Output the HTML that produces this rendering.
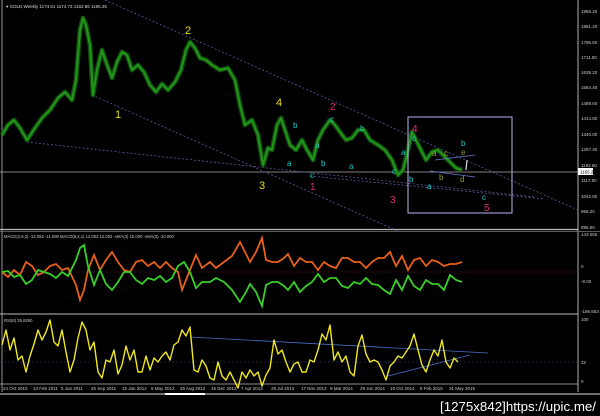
<!DOCTYPE html>
<html><head><meta charset="utf-8"><style>
html,body{margin:0;padding:0;background:#000;width:600px;height:416px;overflow:hidden}
svg{display:block}
text{font-family:"Liberation Sans",sans-serif}
.ax{fill:#ccc;font-size:4.5px;font-family:"Liberation Serif",serif}
.y{fill:#e6df1a;font-size:11px}
.c{fill:#19c9c9;font-size:8px}
.m{fill:#e0287f;font-size:10px}
.o{fill:#9a9a30;font-size:8px}
</style></head><body>
<svg width="600" height="416" viewBox="0 0 600 416">
<rect width="600" height="416" fill="#000"/>
<line x1="2" y1="0" x2="2" y2="392" stroke="#bbb" stroke-width="0.8"/>
<line x1="578" y1="0" x2="578" y2="392" stroke="#ddd" stroke-width="0.8"/>
<line x1="0" y1="229.5" x2="578" y2="229.5" stroke="#bbb" stroke-width="1.2"/>
<line x1="0" y1="231.5" x2="600" y2="231.5" stroke="#777" stroke-width="0.8"/>
<line x1="0" y1="314" x2="578" y2="314" stroke="#bbb" stroke-width="1"/>
<line x1="0" y1="384" x2="578" y2="384" stroke="#bbb" stroke-width="0.8"/>
<line x1="0" y1="394" x2="600" y2="394" stroke="#ddd" stroke-width="1"/>
<line x1="165" y1="394" x2="205" y2="394" stroke="#fff" stroke-width="2"/>
<line x1="0" y1="172" x2="578" y2="172" stroke="#aaa" stroke-width="0.8"/>
<g stroke="#5a5a9a" stroke-width="0.8" stroke-dasharray="2,2" fill="none">
<line x1="105" y1="0" x2="578" y2="210"/>
<line x1="92" y1="95" x2="400" y2="232"/>
<line x1="27" y1="142" x2="535" y2="197"/>
<line x1="310" y1="176" x2="545" y2="199"/>
</g>
<g fill="none" stroke-linejoin="round">
<polyline stroke="#145a10" stroke-width="5" opacity="0.8" points="2,135 8,125 14,120 20,128 27,140 35,128 42,118 50,110 58,98 65,92 72,100 76,80 80,30 83,18 86,25 90,45 93,95 97,70 102,50 106,62 112,78 117,62 122,52 127,55 132,70 138,65 144,72 150,85 156,92 162,84 168,90 175,82 181,70 186,50 190,42 195,48 200,58 206,60 212,65 220,70 228,68 235,80 240,105 245,125 252,120 258,135 263,165 268,148 272,150 277,125 281,118 285,130 290,145 296,150 302,140 307,150 313,160 318,140 323,130 330,120 335,125 340,132 346,140 352,138 358,130 364,130 370,140 378,145 385,150 392,160 398,175 403,170 408,150 412,132 416,140 420,148 426,160 432,152 438,150 444,156 450,162 456,168 462,170"/>
<polyline stroke="#22951a" stroke-width="2.2" points="2,135 8,125 14,120 20,128 27,140 35,128 42,118 50,110 58,98 65,92 72,100 76,80 80,30 83,18 86,25 90,45 93,95 97,70 102,50 106,62 112,78 117,62 122,52 127,55 132,70 138,65 144,72 150,85 156,92 162,84 168,90 175,82 181,70 186,50 190,42 195,48 200,58 206,60 212,65 220,70 228,68 235,80 240,105 245,125 252,120 258,135 263,165 268,148 272,150 277,125 281,118 285,130 290,145 296,150 302,140 307,150 313,160 318,140 323,130 330,120 335,125 340,132 346,140 352,138 358,130 364,130 370,140 378,145 385,150 392,160 398,175 403,170 408,150 412,132 416,140 420,148 426,160 432,152 438,150 444,156 450,162 456,168 462,170"/>
</g>
<rect x="408" y="117" width="104" height="96" fill="none" stroke="#b8b8f0" stroke-width="1"/>
<g stroke="#6a7ad0" stroke-width="0.8"><line x1="435" y1="160" x2="475" y2="155"/><line x1="430" y1="171" x2="475" y2="177"/></g>
<line x1="466" y1="170" x2="467" y2="160" stroke="#dde" stroke-width="1.2"/>
<text class="y" x="185" y="34">2</text><text class="y" x="115" y="118">1</text>
<text class="y" x="276" y="106">4</text><text class="y" x="259" y="189">3</text>
<text class="m" x="330" y="110">2</text><text class="m" x="310" y="190">1</text>
<text class="m" x="390" y="203">3</text><text class="m" x="412" y="132">4</text><text class="m" x="484" y="211">5</text>
<g class="c">
<text x="293" y="128">b</text><text x="287" y="166">a</text><text x="330" y="122">c</text>
<text x="315" y="148">a</text><text x="321" y="166">b</text><text x="310" y="178">c</text>
<text x="360" y="131">b</text><text x="349" y="169">a</text><text x="401" y="155">a</text>
<text x="392" y="174">c</text><text x="412" y="141">c</text><text x="409" y="182">b</text>
<text x="427" y="189">a</text><text x="461" y="146">b</text><text x="482" y="200">c</text>
</g>
<g class="o"><text x="432" y="156">a</text><text x="444" y="156">c</text><text x="439" y="180">b</text><text x="460" y="182">d</text><text x="461" y="155">e</text></g>
<text x="6" y="8" fill="#ddd" font-size="4.5">▾ GOLD,Weekly 1174.61 1174.73 1162.86 1165.25</text>
<g class="ax">
<text x="581" y="13">1956.20</text><text x="581" y="28">1881.40</text><text x="581" y="44">1796.60</text>
<text x="581" y="59">1711.80</text><text x="581" y="74">1639.20</text><text x="581" y="89">1564.40</text>
<text x="581" y="105">1489.60</text><text x="581" y="120">1414.80</text><text x="581" y="136">1340.00</text>
<text x="581" y="151">1267.40</text><text x="581" y="167">1192.60</text><text x="581" y="182">1117.80</text>
<text x="581" y="198">1042.80</text><text x="581" y="213">968.20</text><text x="581" y="229">895.60</text>
<text x="581" y="236">143.055</text><text x="581" y="268">0</text><text x="581" y="283">-8.00</text>
<text x="581" y="313">-186.663</text><text x="581" y="321">100</text><text x="581" y="364">32</text><text x="581" y="383">0</text>
</g>
<rect x="578" y="168" width="15" height="7" fill="#fff"/><text x="580" y="173.5" font-size="4.5" fill="#000">1165.25</text>
<text x="4" y="238" fill="#ccc" font-size="4.2">MACD(2,6,2) -12.053 -11.598  MACD(6,2,1) 12.053 12.053  -vMA(3) 10.000  -vMA(3) -10.000</text>
<line x1="0" y1="272" x2="578" y2="272" stroke="#4a1010" stroke-width="0.6"/>
<polyline fill="none" stroke="#e8601a" stroke-width="1.8" points="2,272 8,277 14,270 20,275 26,262 32,266 38,275 44,272 50,266 56,264 62,270 68,268 76,285 80,300 84,290 88,270 94,255 100,270 106,260 112,252 118,262 124,270 130,272 136,262 142,260 148,266 154,262 160,268 166,262 172,268 178,272 182,290 186,280 190,270 196,255 202,268 210,262 216,268 224,262 232,256 240,242 246,254 250,262 256,252 262,238 266,260 272,262 278,262 284,258 288,254 294,266 300,258 306,262 312,262 318,270 324,262 330,266 336,268 342,258 348,258 354,262 360,262 366,268 372,262 378,258 384,258 390,252 396,266 402,256 408,270 414,260 420,258 426,266 432,260 438,262 444,266 450,264 456,264 462,262"/>
<polyline fill="none" stroke="#38d028" stroke-width="1.8" points="2,272 8,271 14,277 20,275 26,284 32,280 38,270 44,272 50,274 56,278 62,272 68,276 76,260 80,248 84,245 88,266 94,285 100,270 106,284 112,290 118,282 124,272 130,272 136,280 142,284 148,278 154,280 160,276 166,282 172,278 178,266 184,262 190,272 196,288 202,282 210,282 216,278 224,282 232,290 240,302 246,292 250,284 256,292 262,306 266,285 272,282 278,282 284,286 288,290 294,282 300,292 306,286 312,282 318,274 324,282 330,278 336,278 342,286 348,288 354,282 360,284 366,278 372,284 378,285 384,290 390,294 396,280 402,290 408,276 414,286 420,290 426,280 432,284 438,284 444,290 450,275 456,280 462,282"/>
<text x="4" y="322" fill="#ccc" font-size="4.2">RSI(8) 35.6290</text>
<line x1="0" y1="362" x2="578" y2="362" stroke="#304080" stroke-width="0.6" stroke-dasharray="2,2"/>
<g stroke="#4a70c8" stroke-width="0.8"><line x1="190" y1="337" x2="488" y2="353"/><line x1="388" y1="376" x2="470" y2="355"/></g>
<polyline fill="none" stroke="#f0e81a" stroke-width="1.4" stroke-linejoin="round" points="2,345 6,330 10,350 14,338 18,360 22,356 26,372 30,356 34,344 38,330 42,340 46,332 50,320 54,342 58,346 62,330 66,352 70,372 74,360 78,338 82,322 86,330 90,350 94,342 98,372 102,378 106,360 110,362 114,350 118,374 122,365 126,346 130,360 134,350 138,372 142,372 146,356 150,370 154,358 158,362 162,356 166,352 170,360 174,345 178,342 182,330 186,336 190,327 194,370 198,372 202,360 206,366 210,378 214,380 218,362 222,376 226,380 230,372 234,380 238,388 242,372 246,378 250,370 254,376 258,372 262,386 266,375 270,368 274,340 278,354 282,350 286,362 290,372 294,364 298,362 302,372 306,372 310,360 314,362 318,350 322,334 326,340 330,325 334,360 338,352 342,362 346,356 350,372 354,376 358,346 362,335 366,354 370,362 374,360 378,362 382,370 386,380 390,366 394,362 398,356 402,358 406,352 410,346 414,334 418,350 422,365 426,372 430,360 434,350 438,356 442,340 446,362 450,368 454,358 458,362"/>
<g class="ax" font-size="4.2">
<text x="3" y="390">24 Oct 2010</text><text x="33" y="390">13 Feb 2011</text><text x="61" y="390">5 Jun 2011</text>
<text x="91" y="390">25 Sep 2011</text><text x="122" y="390">15 Jan 2012</text><text x="151" y="390">6 May 2012</text>
<text x="180" y="390">26 Aug 2012</text><text x="211" y="390">16 Dec 2012</text><text x="241" y="390">7 Apr 2013</text>
<text x="271" y="390">28 Jul 2013</text><text x="301" y="390">17 Nov 2013</text><text x="330" y="390">9 Mar 2014</text>
<text x="360" y="390">29 Jun 2014</text><text x="390" y="390">19 Oct 2014</text><text x="420" y="390">8 Feb 2015</text>
<text x="449" y="390">31 May 2015</text>
</g>
<text x="440" y="411" fill="#fff" font-size="13" font-family="Liberation Mono,monospace" textLength="156" lengthAdjust="spacingAndGlyphs">[1275x842]https://upic.me/</text>
</svg>
</body></html>
